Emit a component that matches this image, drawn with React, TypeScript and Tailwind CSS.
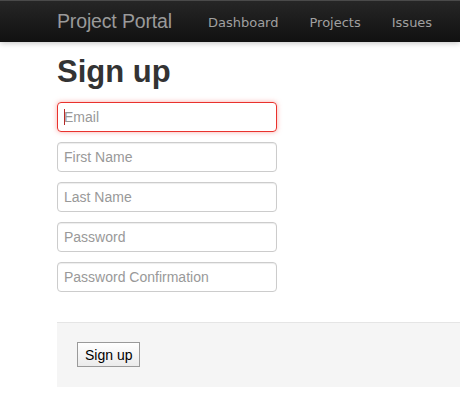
import React from 'react';

const fields = ['Email', 'First Name', 'Last Name', 'Password', 'Password Confirmation'];

const App: React.FC = () => {
  return (
    <div className="w-[460px] h-[401px] bg-white overflow-hidden font-['Liberation_Sans',Arial,sans-serif]">
      <div className="h-[42px] flex items-center bg-gradient-to-b from-[#262626] to-[#111111] border-t border-t-[#4a4a4a] shadow-[0_1px_6px_rgba(0,0,0,0.25)]">
        <span className="ml-[57px] text-[19.5px] text-[#9a9a9a] tracking-[-0.15px]">Project Portal</span>
        <ul className="flex ml-[20.5px] pt-[2px] list-none font-['DejaVu_Sans',Verdana,sans-serif] text-[13px] text-[#a0a0a0]">
          <li className="px-[15.5px]">Dashboard</li>
          <li className="px-[15.5px]">Projects</li>
          <li className="px-[15.5px]">Issues</li>
        </ul>
      </div>

      <div className="pl-[57px]">
        <h1 className="mt-[12px] mb-[12px] text-[31px] leading-[36px] font-bold text-[#333333]">Sign up</h1>

        <form className="flex flex-col gap-[10px]">
          {fields.map((f, i) => (
            <div key={f} className="relative w-[220px]">
              <input
                type="text"
                placeholder={f}
                className={`w-[220px] h-[30px] px-[6px] rounded-[4px] border text-[14px] text-[#555] placeholder:text-[#999999] outline-none ${
                  i === 0
                    ? 'border-[#e9322d] shadow-[0_0_5px_rgba(248,120,115,0.6)]'
                    : 'border-[#cccccc] shadow-[inset_0_1px_1px_rgba(0,0,0,0.075)]'
                }`}
              />
              {i === 0 && <span className="absolute left-[7px] top-[7px] w-px h-[16px] bg-[#b52a2a]" />}
            </div>
          ))}
        </form>

        <div className="mt-[30px] h-[65px] bg-[#f5f5f5] border-t border-t-[#e5e5e5] pl-[20px] pt-[19px]">
          <button className="h-[25px] px-[7px] border border-[#9a9a9a] bg-gradient-to-b from-white to-[#ebebeb] text-[14px] text-black leading-none">
            Sign up
          </button>
        </div>
      </div>
    </div>
  );
};

export default App;
